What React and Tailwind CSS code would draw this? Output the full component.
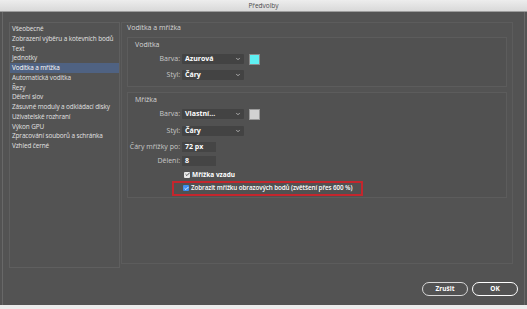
import { Check, ChevronDown } from "lucide-react"

const sections = [
  "Všeobecné",
  "Zobrazení výběru a kotevních bodů",
  "Text",
  "Jednotky",
  "Vodítka a mřížka",
  "Automatická vodítka",
  "Řezy",
  "Dělení slov",
  "Zásuvné moduly a odkládací disky",
  "Uživatelské rozhraní",
  "Výkon GPU",
  "Zpracování souborů a schránka",
  "Vzhled černé",
]

function Select({ value }) {
  return (
    <div className="w-[62px] h-[10px] bg-[#434343] flex items-center justify-between pl-[3px] pr-[3px] rounded-[1px]">
      <span className="text-[7px] leading-[10px] font-bold text-white">{value}</span>
      <ChevronDown className="w-[6px] h-[6px] text-[#cfcfcf]" strokeWidth={3} />
    </div>
  )
}

function Field({ value }) {
  return (
    <div className="w-[34px] h-[10px] bg-[#454545] pl-[3px] text-[7px] leading-[10px] font-bold text-white">
      {value}
    </div>
  )
}

function Row({ label, h = "h-[16px]", mt = "", children }) {
  return (
    <div className={`flex items-center gap-[2px] ${h} ${mt}`}>
      <div className="w-[52px] text-right text-[7px] text-[#c9c9c9] whitespace-nowrap">{label}</div>
      {children}
    </div>
  )
}

export default function App() {
  return (
    <div
      className="w-[527px] h-[309px] flex flex-col bg-[#535353] overflow-hidden"
      style={{ fontFamily: '"Open Sans", "Liberation Sans", sans-serif' }}
    >
      {/* title bar */}
      <div className="h-[12px] bg-gradient-to-b from-[#ededed] to-[#d9d9d9] border-b border-[#9c9c9c] text-center text-[6.5px] leading-[11px] text-[#4a4a4a]">
        Předvolby
      </div>

      <div className="flex-1 mx-[2px] border-x border-[#686868] flex flex-col">
        <div className="flex pt-[10px] pl-[6px]">
          {/* sidebar */}
          <div className="w-[111px] h-[246px] border border-[#5f5f5f] pt-[1px] overflow-hidden">
            {sections.map((s, i) => (
              <div
                key={s}
                className={`h-[9.75px] leading-[9.75px] pl-[2px] text-[6.4px] tracking-[-0.1px] text-[#e2e2e2] whitespace-nowrap ${
                  i === 4 ? "bg-[#4f6282] text-white" : ""
                }`}
              >
                {s}
              </div>
            ))}
          </div>

          {/* content */}
          <div className="ml-[1px] w-[392px] h-[242px] border border-[#5c5c5c]">
            <div className="pl-[5px] text-[7px] leading-[10px] text-[#d6d6d6]">Vodítka a mřížka</div>

            <div className="mx-[5px] mt-[4px] border border-[#5c5c5c] bg-[#515151] pt-[2px] pb-[3px] h-[50px]">
              <div className="pl-[7px] text-[7px] leading-[10px] text-[#d6d6d6]">Vodítka</div>
              <Row label="Barva:" mt="mt-[1px]">
                <Select value="Azurová" />
                <div className="ml-[3px] w-[11px] h-[11px] bg-[#5ff0f2] border border-[#8a8a8a]" />
              </Row>
              <Row label="Styl:">
                <Select value="Čáry" />
              </Row>
            </div>

            <div className="mx-[5px] mt-[5px] border border-[#5c5c5c] bg-[#515151] pt-[2px] h-[106px]">
              <div className="pl-[7px] text-[7px] leading-[10px] text-[#d6d6d6]">Mřížka</div>
              <Row label="Barva:" mt="mt-[1px]">
                <Select value="Vlastní..." />
                <div className="ml-[3px] w-[11px] h-[11px] bg-[#d2d2d2] border border-[#9a9a9a]" />
              </Row>
              <Row label="Styl:" mt="mt-[1px]">
                <Select value="Čáry" />
              </Row>
              <Row label="Čáry mřížky po:" h="h-[14px]" mt="mt-[1px]">
                <Field value="72 px" />
              </Row>
              <Row label="Dělení:" h="h-[14px]">
                <Field value="8" />
              </Row>
              <Row label="" h="h-[13px]">
                <div className="flex items-center gap-[2px] pl-[2px]">
                  <div className="w-[6px] h-[6px] bg-[#e8e8e8] rounded-[1px] flex items-center justify-center">
                    <Check className="w-[5px] h-[5px] text-[#333]" strokeWidth={4} />
                  </div>
                  <span className="text-[6.5px] font-bold text-white">Mřížka vzadu</span>
                </div>
              </Row>
              <Row label="" h="h-[14px]">
                <div className="-ml-[10px] h-[15px] w-[191px] border-2 border-[#c4262d] flex items-center gap-[2px] pl-[9px]">
                  <div className="w-[6px] h-[6px] bg-[#3f8ff0] rounded-[1px] flex items-center justify-center">
                    <Check className="w-[5px] h-[5px] text-white" strokeWidth={4} />
                  </div>
                  <span className="text-[6.3px] font-semibold tracking-[-0.1px] text-white whitespace-nowrap">
                    Zobrazit mřížku obrazových bodů (zvětšení přes 600 %)
                  </span>
                </div>
              </Row>
            </div>
          </div>
        </div>

        {/* buttons */}
        <div className="flex justify-end gap-[4px] pr-[6px] mt-[14px]">
          <button className="w-[46px] h-[14px] rounded-full border border-[#d8d8d8] text-[6.5px] font-bold text-white">
            Zrušit
          </button>
          <button className="w-[46px] h-[14px] rounded-full border-[1.5px] border-white text-[6.5px] font-bold text-white">
            OK
          </button>
        </div>
      </div>

      <div className="h-[4px] bg-[#ececec]" />
    </div>
  )
}
